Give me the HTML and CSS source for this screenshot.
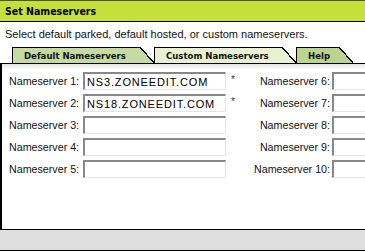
FILE: index.html
```html
<!DOCTYPE html>
<html lang="en">
<head>
    <meta charset="UTF-8">
    <meta name="viewport" content="width=device-width, initial-scale=1.0">
    <title>Set Nameservers</title>
    <link rel="stylesheet" href="styles.css">
</head>
<body>
    <div class="page">
        <div class="title-bar">Set Nameservers</div>
        <p class="intro">Select default parked, default hosted, or custom nameservers.</p>

        <ul class="tabs">
            <li class="tab tab-default"><span class="tab-body">Default Nameservers</span><span class="tab-edge"></span></li>
            <li class="tab tab-custom"><span class="tab-body">Custom Nameservers</span><span class="tab-edge"></span></li>
            <li class="tab tab-help"><span class="tab-body">Help</span><span class="tab-edge"></span></li>
        </ul>

        <div class="panel">
            <form class="ns-grid">
                <label for="ns1">Nameserver 1:</label>
                <input type="text" id="ns1" value="NS3.ZONEEDIT.COM">
                <span class="req">*</span>
                <label for="ns6" class="right">Nameserver 6:</label>
                <input type="text" id="ns6" class="cut">

                <label for="ns2">Nameserver 2:</label>
                <input type="text" id="ns2" value="NS18.ZONEEDIT.COM">
                <span class="req">*</span>
                <label for="ns7" class="right">Nameserver 7:</label>
                <input type="text" id="ns7" class="cut">

                <label for="ns3">Nameserver 3:</label>
                <input type="text" id="ns3">
                <span class="req"></span>
                <label for="ns8" class="right">Nameserver 8:</label>
                <input type="text" id="ns8" class="cut">

                <label for="ns4">Nameserver 4:</label>
                <input type="text" id="ns4">
                <span class="req"></span>
                <label for="ns9" class="right">Nameserver 9:</label>
                <input type="text" id="ns9" class="cut">

                <label for="ns5">Nameserver 5:</label>
                <input type="text" id="ns5">
                <span class="req"></span>
                <label for="ns10" class="right">Nameserver 10:</label>
                <input type="text" id="ns10" class="cut">
            </form>
        </div>

        <!-- Button bar -->
        <div class="footer-bar"></div>
    </div>
</body>
</html>
```

FILE: styles.css
```css
body {
    font-family: "Liberation Sans", Arial, sans-serif;
    font-size: 11px;
    color: #111;
    background-color: #fff;
    margin: 0;
    padding: 0;
    overflow: hidden;
}
.page {
    width: 365px;
}
.title-bar {
    height: 20px;
    line-height: 20px;
    padding-left: 5px;
    background-color: #c6e03b;
    border-top: 1px solid #4a5a10;
    border-bottom: 1px solid #000;
    font-family: "DejaVu Sans Condensed", "DejaVu Sans", sans-serif;
    font-stretch: condensed;
    font-weight: bold;
    font-size: 10.5px;
    color: #000;
}
.intro {
    margin: 0;
    padding: 6px 5px 6px;
    line-height: 13px;
}
/* Tabs */
.tabs {
    display: flex;
    margin: 0;
    padding: 0 0 0 12px;
    list-style: none;
}
.tab {
    display: flex;
    height: 16px;
}
.tab-body {
    display: flex;
    align-items: center;
    box-sizing: border-box;
    height: 16px;
    padding-left: 11px;
    border-top: 1px solid #000;
    border-left: 1px solid #000;
    font-family: "DejaVu Sans Condensed", "DejaVu Sans", sans-serif;
    font-stretch: condensed;
    font-weight: bold;
    font-size: 9.5px;
    color: #111;
}
.tab-edge {
    width: 14px;
    height: 16px;
}
.tab-default .tab-body { width: 128px; background-color: #c6dba3; }
.tab-default .tab-edge { background: linear-gradient(to top right, #c6dba3 47%, #000 47%, #000 53%, transparent 53%); }
.tab-custom .tab-body { width: 128px; background-color: #e8f1d1; }
.tab-custom .tab-edge { background: linear-gradient(to top right, #e8f1d1 47%, #000 47%, #000 53%, transparent 53%); }
.tab-help .tab-body { width: 43px; background-color: #bbd490; }
.tab-help .tab-edge { background: linear-gradient(to top right, #bbd490 47%, #000 47%, #000 53%, transparent 53%); }
/* Form panel */
.panel {
    height: 165px;
    border-top: 1px solid #000;
    border-left: 2px solid #000;
    background: linear-gradient(#e4e4e4, #fff 6px);
}
.ns-grid {
    display: grid;
    grid-template-columns: 74px 143px 25px 81px minmax(0, 1fr);
    grid-auto-rows: 18px;
    row-gap: 4px;
    align-items: center;
    margin: 0;
    padding: 8px 0 0 7px;
}
.ns-grid label {
    white-space: nowrap;
    font-size: 10.7px;
}
.ns-grid label.right {
    text-align: right;
    margin-right: 2px;
}
.ns-grid input[type="text"] {
    box-sizing: border-box;
    width: 100%;
    height: 18px;
    margin: 0;
    padding: 1px 2px 0;
    border-top: 2px solid #888;
    border-left: 2px solid #888;
    border-right: 1px solid #e6e6e6;
    border-bottom: 1px solid #e6e6e6;
    border-radius: 0;
    font-family: "Liberation Sans", Arial, sans-serif;
    font-size: 11px;
    letter-spacing: 0.85px;
    color: #000;
    background-color: #fff;
    outline: none;
}
.ns-grid input.cut {
    border-right: none;
}
.req {
    align-self: start;
    padding: 2px 0 0 5px;
    font-size: 10px;
    color: #333;
}
.footer-bar {
    height: 20px;
    border-top: 1px solid #000;
    border-bottom: 1px solid #000;
    background-color: #dedede;
}
```
